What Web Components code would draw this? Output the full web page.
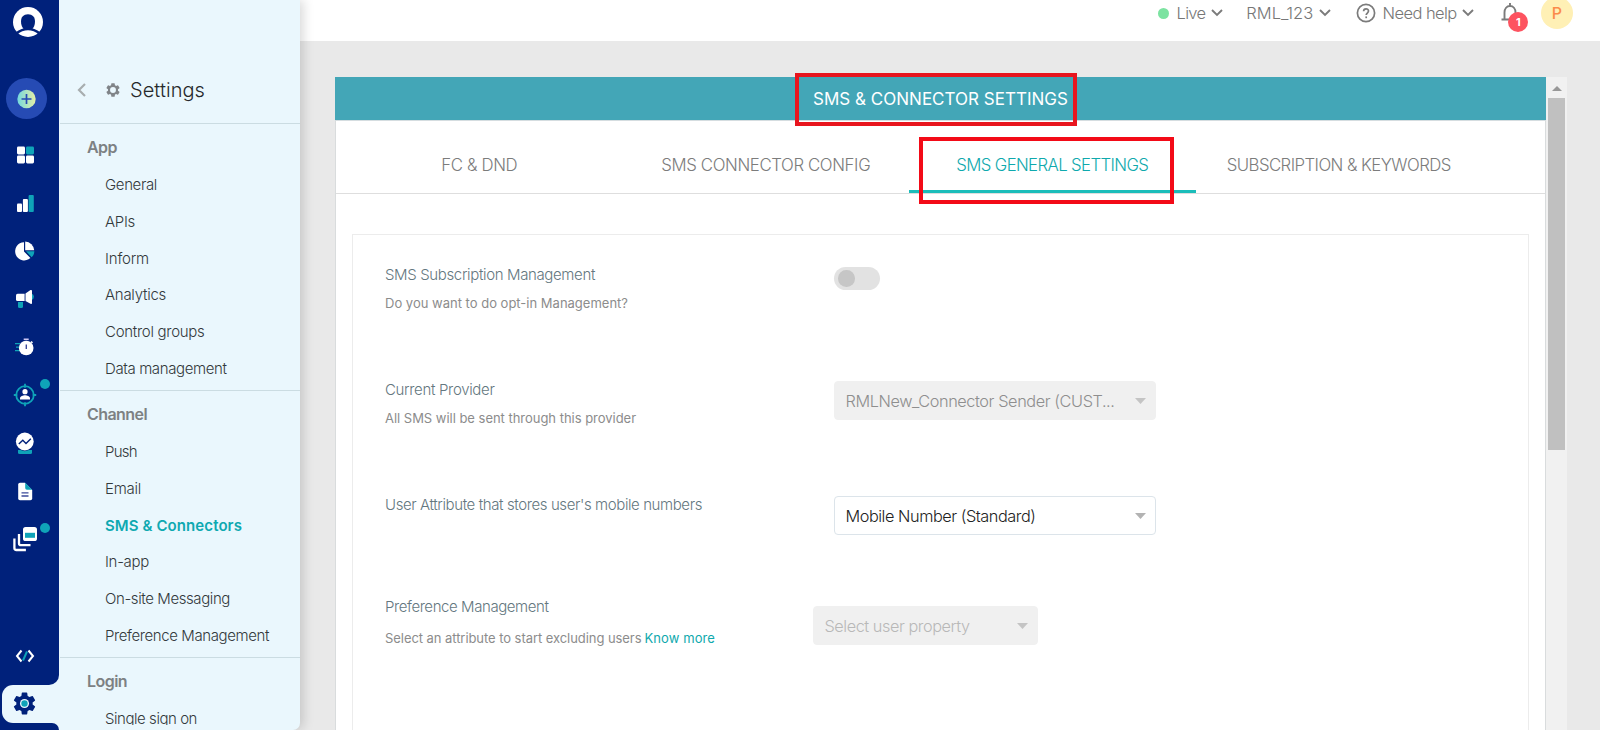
<!DOCTYPE html>
<html lang="en">
<head>
<meta charset="utf-8">
<title>Settings - SMS &amp; Connectors</title>
<style>
  body {
    margin: 0;
    width: 1600px;
    height: 730px;
    overflow: hidden;
    background: #e9e9e9;
    font-family: Inter, "Open Sans", sans-serif;
    font-weight: 300;
  }
</style>
</head>
<body>
<app-shell>
  <nav-rail slot="rail"></nav-rail>

  <settings-menu slot="menu">
    <menu-section heading="App" measure="30">
      <menu-item measure="52">General</menu-item>
      <menu-item measure="30">APIs</menu-item>
      <menu-item measure="44">Inform</menu-item>
      <menu-item measure="61">Analytics</menu-item>
      <menu-item measure="99.500">Control groups</menu-item>
      <menu-item measure="121.500">Data management</menu-item>
    </menu-section>
    <menu-section heading="Channel" measure="60">
      <menu-item measure="32">Push</menu-item>
      <menu-item measure="36">Email</menu-item>
      <menu-item measure="137" active>SMS &amp; Connectors</menu-item>
      <menu-item measure="44">In-app</menu-item>
      <menu-item measure="125">On-site Messaging</menu-item>
      <menu-item measure="164">Preference Management</menu-item>
    </menu-section>
    <menu-section heading="Login" measure="40">
      <menu-item measure="92">Single sign on</menu-item>
    </menu-section>
  </settings-menu>

  <top-bar slot="top"></top-bar>

  <settings-panel heading="SMS &amp; CONNECTOR SETTINGS">
    <panel-tab slot="tab" measure="76">FC &amp; DND</panel-tab>
    <panel-tab slot="tab" measure="209">SMS CONNECTOR CONFIG</panel-tab>
    <panel-tab slot="tab" measure="192">SMS GENERAL SETTINGS</panel-tab>
    <panel-tab slot="tab" measure="224">SUBSCRIPTION &amp; KEYWORDS</panel-tab>

    <form-row style="height:115px">
      <fit-text slot="label" measure="210">SMS Subscription Management</fit-text>
      <fit-text slot="hint" measure="243">Do you want to do opt-in Management?</fit-text>
      <toggle-switch></toggle-switch>
    </form-row>
    <form-row style="height:115px">
      <fit-text slot="label" measure="109.500">Current Provider</fit-text>
      <fit-text slot="hint" measure="251">All SMS will be sent through this provider</fit-text>
      <select-box disabled measure="269">RMLNew_Connector Sender (CUST...</select-box>
    </form-row>
    <form-row style="height:102px">
      <fit-text slot="label" measure="317">User Attribute that stores user's mobile numbers</fit-text>
      <select-box measure="190">Mobile Number (Standard)</select-box>
    </form-row>
    <form-row style="height:110px" compact>
      <fit-text slot="label" measure="163.500">Preference Management</fit-text>
      <fit-text slot="hint" measure="256.500">Select an attribute to start excluding users</fit-text>
      <fit-text slot="link" measure="70.500">Know more</fit-text>
      <select-box disabled placeholder measure="145">Select user property</select-box>
    </form-row>
  </settings-panel>
</app-shell>

<script>
// Sets the tracking of its text so that the text fills the given measure
class FitText extends HTMLElement {
  constructor() {
    super();
    this.attachShadow({mode: 'open'}).innerHTML = `
      <style>
        :host { display: inline-block; white-space: nowrap; }
      </style>
      <slot></slot>
    `;
  }

  connectedCallback() {
    const measure = parseFloat(this.getAttribute('measure'));
    const count = this.textContent.length;
    if (!measure || !count) return;
    this.style.letterSpacing = '0px';
    const range = document.createRange();
    range.selectNodeContents(this);
    const width = range.getBoundingClientRect().width;
    if (width) this.style.letterSpacing = `${((measure - width) / count).toFixed(3)}px`;
  }
}

class AppShell extends HTMLElement {
  constructor() {
    super();
    this.attachShadow({mode: 'open'}).innerHTML = `
      <style>
        :host {
          display: grid;
          grid-template-columns: 60px 240px 1fr;
          width: 1600px;
          height: 730px;
        }
        .main {
          display: flex;
          flex-direction: column;
          min-width: 0;
          height: 730px;
          overflow: hidden;
        }
        .content {
          flex: 1;
          min-height: 0;
          padding: 36px 33px 0 35px;
        }
      </style>
      <slot name="rail"></slot>
      <slot name="menu"></slot>
      <div class="main">
        <slot name="top"></slot>
        <div class="content"><slot></slot></div>
      </div>
    `;
  }
}

const railIcons = [
  // dashboard
  `<svg width="18" height="18" viewBox="0 0 18 18"><g fill="#fff"><rect x="1" y=".5" width="8" height="8" rx="1.4"/><rect x="1" y="9.5" width="8" height="8" rx="1.4"/><rect x="10" y="9.5" width="8" height="8" rx="1.4"/></g><rect x="10" y=".5" width="8" height="8" rx="1.4" fill="#0fa3b8"/></svg>`,
  // bars
  `<svg width="18" height="18" viewBox="0 0 18 18"><rect x="1" y="9.4" width="5" height="8.6" rx="1" fill="#fff"/><rect x="6.900" y="5" width="5" height="13" rx="1" fill="#fff"/><rect x="12.600" y="1" width="5.2" height="17" rx="1" fill="#0fa3b8"/></svg>`,
  // pie
  `<svg width="20" height="20" viewBox="0 0 20 20"><path d="M9 1.2v9.2l6.4 6.6A9.1 9.1 0 1 1 9 1.2z" fill="#fff"/><path d="M10.2.6a9.2 9.2 0 0 1 9 8.7h-9z" fill="#fff"/><path d="M11 10.3h8.4a9 9 0 0 1-2.7 6z" fill="#0fa3b8"/></svg>`,
  // megaphone
  `<svg width="20" height="20" viewBox="0 0 20 20"><path d="M3 13h5v4.500q0 1.500-1.500 1.500H4.500Q3 19 3 17.500z" fill="#0fa3b8"/><path d="M16.500 4.600a3.400 3.400 0 0 1 0 6.500z" fill="#0fa3b8"/><path d="M2.600 4.800h7v7.200h-7Q1 12 1 10.400V6.400Q1 4.800 2.600 4.800z" fill="#fff"/><path d="M10.500 4.500L15.500 1Q17 .5 17 2v12q0 1.500-1.500.8L10.500 12z" fill="#fff"/></svg>`,
  // timer
  `<svg width="20" height="20" viewBox="0 0 20 20"><g fill="none" stroke="#0fa3b8" stroke-width="1.300"><path d="M0 6.700h5M1 10.200h4M0 13.600h5"/></g><circle cx="11.200" cy="11" r="7.300" fill="#fff"/><path d="M8.700 2.300h5" stroke="#cfc8f5" stroke-width="1.600"/><path d="M16 4.500l1.500 1.400" stroke="#fff" stroke-width="1.500"/><path d="M11.300 7.500v4.500" stroke="#3c4a9a" stroke-width="1.400"/></svg>`,
  // target
  `<svg width="24" height="24" viewBox="0 0 24 24"><circle cx="12" cy="12" r="8.800" fill="none" stroke="#0fa3b8" stroke-width="1.800"/><path d="M12 .8v4M12 19.200v4M.8 12h3.500M19.700 12h3.500" stroke="#0fa3b8" stroke-width="1.800"/><circle cx="12" cy="8.700" r="2.600" fill="#fff"/><path d="M7 16.500v-1.300c0-2 3-3 5-3s5 1 5 3v1.300z" fill="#fff"/></svg>`,
  // predictions
  `<svg width="20" height="24" viewBox="0 0 20 24"><path d="M3 19h14v2.500q0 1.500-1.500 1.500h-11Q3 23 3 21.500z" fill="#0fa3b8"/><circle cx="9.800" cy="10.500" r="9.700" fill="#00217b"/><circle cx="9.800" cy="10.500" r="8.900" fill="#fff"/><path d="M3.800 13l4-3.800 3.200 3.200 4.800-4.700" fill="none" stroke="#00217b" stroke-width="1.400"/></svg>`,
  // document
  `<svg width="18" height="20" viewBox="0 0 18 20"><path d="M4 1.700H9L16.200 9v8.500q0 1.800-1.800 1.800H4q-1.800 0-1.800-1.800v-14q0-1.800 1.800-1.800z" fill="#fff"/><path d="M9.200 1.700l7 7h-5.200q-1.800 0-1.800-1.800z" fill="#0fa3b8"/><path d="M5.500 11.800h7M5.500 15h7" stroke="#3c4a9a" stroke-width="1.300"/></svg>`,
  // layers
  `<svg width="26" height="26" viewBox="0 0 26 26"><g fill="none" stroke="#fff" stroke-width="2.300"><path d="M2.400 12.500v9.500q0 2 2 2h9.500"/><path d="M7 8v9.200q0 2 2 2h9.500"/></g><rect x="11" y="1" width="14" height="14" rx="2.600" fill="#fff"/><rect x="13" y="6.800" width="10" height="5" fill="#0fa3b8"/></svg>`
];

const gearPath = 'M19.140 12.940c.040-.300.060-.610.060-.940s-.020-.640-.070-.940l2.030-1.580a.5.5 0 0 0 .120-.610l-1.920-3.320a.5.5 0 0 0-.590-.220l-2.390.960a7 7 0 0 0-1.620-.940l-.360-2.540a.5.5 0 0 0-.480-.410h-3.840a.5.5 0 0 0-.470.410l-.360 2.540c-.590.240-1.130.570-1.620.940l-2.390-.960a.5.5 0 0 0-.590.220L2.740 8.870a.5.5 0 0 0 .120.610l2.030 1.580c-.050.300-.090.630-.090.940s.020.640.070.940l-2.030 1.580a.5.5 0 0 0-.120.610l1.920 3.320c.120.220.370.290.590.220l2.390-.960c.500.380 1.030.700 1.620.940l.360 2.540c.050.240.240.410.480.410h3.840c.240 0 .440-.170.470-.410l.360-2.540c.590-.240 1.130-.560 1.620-.940l2.390.960c.220.080.470 0 .590-.220l1.920-3.320a.5.5 0 0 0-.120-.610z';

class NavRail extends HTMLElement {
  constructor() {
    super();
    const badged = [5, 8];
    const items = railIcons.map((icon, i) =>
      `<div class="item">${icon}${badged.includes(i) ? '<i></i>' : ''}</div>`).join('');
    this.attachShadow({mode: 'open'}).innerHTML = `
      <style>
        :host {
          display: flex;
          flex-direction: column;
          height: 730px;
          overflow: hidden;
          background: #eaf7fd;
        }
        svg { display: block; }
        .blue {
          box-sizing: border-box;
          width: 59.300px;
          height: 685px;
          flex: none;
          background: #00217b;
          border-radius: 0 0 10px 0;
        }
        .logo { padding: 7px 0 0 13px; }
        .plus {
          display: flex;
          align-items: center;
          justify-content: center;
          width: 41px;
          height: 41px;
          margin: 41px 0 12px 6px;
          border-radius: 50%;
          background: #264bb4;
        }
        .item {
          position: relative;
          display: flex;
          align-items: center;
          justify-content: center;
          width: 50px;
          height: 48px;
        }
        .item i {
          position: absolute;
          left: 40px;
          top: 8px;
          width: 10px;
          height: 10px;
          border-radius: 50%;
          background: #0fa3b8;
        }
        .code { margin-top: 69px; }
        .current {
          display: flex;
          height: 37.500px;
          flex: none;
          background: #00217b;
        }
        .current div {
          display: flex;
          align-items: center;
          box-sizing: border-box;
          width: 58px;
          margin-left: 2px;
          padding-left: 10px;
          background: #eaf7fd;
          border-radius: 11px 0 0 11px;
        }
        .foot {
          width: 59.300px;
          flex: 1;
          background: #00217b;
          border-radius: 0 10px 0 0;
        }
      </style>
      <div class="blue">
        <div class="logo">
          <svg width="30" height="30" viewBox="0 0 30 30">
            <circle cx="15" cy="15" r="15" fill="#fff"/>
            <path d="M15 7.300c4.500 0 7 3 7 7.200 0 3.600-1.300 6.500-3.200 8h-7.600c-1.900-1.500-3.200-4.400-3.200-8 0-4.200 2.500-7.200 7-7.200z" fill="#00217b"/>
            <path d="M3 26.500Q15 17.500 27 26.500" fill="none" stroke="#00217b" stroke-width="2.300"/>
          </svg>
        </div>
        <div class="plus">
          <svg width="20" height="20" viewBox="0 0 20 20">
            <linearGradient id="g"><stop offset="0" stop-color="#73d8df"/><stop offset="1" stop-color="#e4efa6"/></linearGradient>
            <circle cx="9.500" cy="10" r="9.200" fill="url(#g)"/>
            <path d="M4.500 10h10M9.500 5v10" stroke="#264bb4" stroke-width="1.700"/>
          </svg>
        </div>
        ${items}
        <div class="item code">
          <svg width="20" height="14" viewBox="0 0 20 14" fill="none" stroke-width="2">
            <path d="M6.500 1.500L2 7l4.500 5.500M13.500 1.500L18 7l-4.500 5.500" stroke="#fff"/>
            <path d="M12 2.500L8 11.500" stroke="#0fa3b8"/>
          </svg>
        </div>
      </div>
      <div class="current"><div>
        <svg width="25" height="25" viewBox="1 1 22 22">
          <path d="${gearPath}" fill="#00217b"/>
          <circle cx="12" cy="12" r="4" fill="#eaf7fd"/>
          <circle cx="12" cy="12" r="2.800" fill="#0fa3b8"/>
        </svg>
      </div></div>
      <div class="foot"></div>
    `;
  }
}

class SettingsMenu extends HTMLElement {
  constructor() {
    super();
    this.attachShadow({mode: 'open'}).innerHTML = `
      <style>
        :host {
          display: block;
          position: relative;
          z-index: 1;
          box-sizing: border-box;
          height: 730px;
          background: #eaf7fd;
          border-radius: 0 0 7px 0;
          box-shadow: 3px 0 12px rgba(0, 0, 0, .16);
          clip-path: inset(0 -20px 0 0);
        }
        header {
          display: flex;
          align-items: center;
          box-sizing: border-box;
          height: 124px;
          padding: 56px 0 0 17px;
          border-bottom: 1px solid #cbdce2;
        }
        header fit-text {
          margin-left: 10.500px;
          font-size: 20px;
          line-height: 24px;
          color: #26292b;
        }
        .gear { margin-left: 19.500px; }
        .list {
          height: 601px;
          overflow: hidden;
        }
      </style>
      <header>
        <svg width="9" height="14" viewBox="0 0 9 14" fill="none" stroke="#a8adaf" stroke-width="2.200"><path d="M8 1L2 7l6 6"/></svg>
        <svg class="gear" width="14" height="14" viewBox="2 2 20 20"><path fill="#808488" fill-rule="evenodd" d="${gearPath} M12 7.800a4.200 4.200 0 1 0 0 8.400 4.200 4.200 0 0 0 0-8.400z"/></svg>
        <fit-text measure="75">Settings</fit-text>
      </header>
      <div class="list"><slot></slot></div>
    `;
  }
}

class MenuSection extends HTMLElement {
  constructor() {
    super();
    this.attachShadow({mode: 'open'}).innerHTML = `
      <style>
        :host {
          display: block;
          box-sizing: border-box;
          padding-bottom: 2.500px;
          border-bottom: 1px solid #cbdce2;
        }
        h2 {
          box-sizing: border-box;
          height: 43.300px;
          margin: 0;
          padding: 13px 0 0 27px;
          font-size: 16px;
          font-weight: 600;
          line-height: 20px;
          color: #7d8183;
        }
      </style>
      <h2><fit-text measure="${this.getAttribute('measure')}">${this.getAttribute('heading')}</fit-text></h2>
      <slot></slot>
    `;
  }
}

class MenuItem extends HTMLElement {
  constructor() {
    super();
    this.attachShadow({mode: 'open'}).innerHTML = `
      <style>
        :host {
          display: block;
          height: 36.700px;
          padding-left: 45px;
          font-size: 15px;
          line-height: 36.700px;
          color: #33393c;
        }
        :host([active]) {
          font-weight: 600;
          color: #0fa9b1;
        }
      </style>
      <fit-text measure="${this.getAttribute('measure')}">${this.innerHTML}</fit-text>
    `;
  }
}

class TopBar extends HTMLElement {
  constructor() {
    super();
    const chevron = `<svg class="chevron" width="12" height="8" viewBox="0 0 12 8" fill="none" stroke="#7b7b7b" stroke-width="1.900"><path d="M1 1l5 5 5-5"/></svg>`;
    this.attachShadow({mode: 'open'}).innerHTML = `
      <style>
        :host {
          display: flex;
          align-items: center;
          box-sizing: border-box;
          height: 41px;
          flex: none;
          padding: 0 27px 15px 858px;
          background: #fff;
          font-size: 16.500px;
          line-height: 24px;
          color: #777;
        }
        svg { display: block; flex: none; }
        .dot {
          width: 11px;
          height: 11px;
          border-radius: 50%;
          background: #7ce3a1;
        }
        .chevron { margin-left: 5.300px; }
        .bell { position: relative; margin-left: 27.500px; }
        .count {
          position: absolute;
          left: 7px;
          top: 9px;
          width: 20px;
          height: 20px;
          border-radius: 50%;
          background: #fd5360;
          color: #fff;
          font-size: 11px;
          font-weight: 700;
          line-height: 20px;
          text-align: center;
        }
        .avatar {
          width: 32px;
          height: 32px;
          margin-left: auto;
          border-radius: 50%;
          background: #fff0b5;
          color: #fb8b4b;
          font-size: 16px;
          font-weight: 500;
          line-height: 32px;
          text-align: center;
        }
      </style>
      <span class="dot"></span>
      <fit-text measure="29" style="margin-left:7.500px">Live</fit-text>${chevron}
      <fit-text measure="67" style="margin-left:23.500px">RML_123</fit-text>${chevron}
      <svg style="margin-left:25px" width="20" height="20" viewBox="0 0 20 20" fill="none" stroke="#7b7b7b" stroke-width="1.700"><circle cx="10" cy="10" r="8.600"/><path d="M7.600 8.300c0-3.300 4.900-3.200 4.900-.2 0 1.900-2.300 2-2.300 3.900"/><path d="M10.200 13.400v1.800"/></svg>
      <fit-text measure="74" style="margin-left:7px">Need help</fit-text>${chevron}
      <div class="bell">
        <svg width="18" height="20" viewBox="0 0 18 20" fill="none" stroke="#7b7b7b" stroke-width="1.900"><path d="M9 0v3M3.500 16.500V9.500c0-4 2.300-6.500 5.500-6.500s5.500 2.500 5.500 6.500v7M.5 16.500h17"/></svg>
        <span class="count">1</span>
      </div>
      <div class="avatar">P</div>
    `;
  }
}

class SettingsPanel extends HTMLElement {
  constructor() {
    super();
    this.attachShadow({mode: 'open'}).innerHTML = `
      <style>
        :host {
          display: flex;
          height: 660px;
        }
        .panel {
          box-sizing: border-box;
          width: 1211px;
          background: #fff;
          border: 1px solid #d9dcdd;
          border-top: 0;
        }
        .title {
          height: 43px;
          margin: 0 -1px;
          background: #43a6b7;
          border-bottom: 1px solid #d5dde0;
          box-sizing: content-box;
          display: flex;
          justify-content: center;
          font-size: 17px;
          font-weight: 400;
          line-height: 45px;
          color: #fff;
        }
        .tabs {
          display: flex;
          height: 72px;
          border-bottom: 1px solid #dedede;
        }
        .card {
          box-sizing: border-box;
          height: 520px;
          margin: 40px 16px 0;
          padding: 25px 32px 0;
          border: 1px solid #ececec;
        }
        .scroll {
          box-sizing: border-box;
          width: 21px;
          padding: 9px 2px 0 2px;
          background: #f1f1f1;
        }
        .scroll svg { display: block; margin: 0 auto 7px; }
        .thumb {
          height: 352px;
          background: #c0c0c0;
        }
        /* red frames drawn over the heading and the current tab */
        .title span, .mark {
          position: relative;
        }
        .title span::after {
          content: "";
          position: absolute;
          box-sizing: border-box;
          left: -18px;
          top: -4.500px;
          width: 282px;
          height: 53px;
          border: 4px solid #e8151e;
        }
        .mark::after {
          content: "";
          position: absolute;
          box-sizing: border-box;
          left: 583px;
          top: 16px;
          width: 255px;
          height: 67px;
          border: 4px solid #f30a17;
        }
      </style>
      <div class="panel">
        <div class="title"><span><fit-text measure="255">${this.getAttribute('heading').replace('&', '&amp;')}</fit-text></span></div>
        <div class="tabs mark"><slot name="tab"></slot></div>
        <div class="card"><slot></slot></div>
      </div>
      <div class="scroll">
        <svg width="10" height="5" viewBox="0 0 10 5"><path d="M5 0l5 5H0z" fill="#989898"/></svg>
        <div class="thumb"></div>
      </div>
    `;
    this.querySelectorAll('panel-tab')[2].setAttribute('active', '');
  }
}

class PanelTab extends HTMLElement {
  constructor() {
    super();
    this.attachShadow({mode: 'open'}).innerHTML = `
      <style>
        :host {
          display: flex;
          justify-content: center;
          box-sizing: border-box;
          width: 286.500px;
          height: 72px;
          padding-top: 32px;
          font-size: 16.800px;
          line-height: 24px;
          color: #7c7c7c;
        }
        :host([active]) {
          color: #0fa9ad;
          border-bottom: 3px solid #1bbdba;
        }
      </style>
      <fit-text measure="${this.getAttribute('measure')}">${this.innerHTML}</fit-text>
    `;
  }
}

class FormRow extends HTMLElement {
  constructor() {
    super();
    this.attachShadow({mode: 'open'}).innerHTML = `
      <style>
        :host {
          display: grid;
          grid-template-columns: 449px 1fr;
          align-items: start;
        }
        :host([compact]) { grid-template-columns: 428px 1fr; }
        .label {
          padding-top: 5px;
          font-size: 15px;
          line-height: 20px;
          color: #647780;
        }
        .hint {
          margin-top: 8px;
          font-size: 13px;
          font-weight: 400;
          line-height: 20px;
          color: #8c8c8c;
        }
        :host([compact]) .hint { margin-top: 11px; }
        ::slotted([slot="link"]) {
          margin-left: 3px;
          color: #0fa9ad;
        }
        .field { padding-top: 7px; }
        :host([compact]) .field { padding-top: 15px; }
      </style>
      <div>
        <div class="label"><slot name="label"></slot></div>
        <div class="hint"><slot name="hint"></slot><slot name="link"></slot></div>
      </div>
      <div class="field"><slot></slot></div>
    `;
  }
}

class ToggleSwitch extends HTMLElement {
  constructor() {
    super();
    this.attachShadow({mode: 'open'}).innerHTML = `
      <style>
        :host {
          display: flex;
          align-items: center;
          box-sizing: border-box;
          width: 46px;
          height: 23px;
          padding-left: 4px;
          border-radius: 12px;
          background: #e2e2e2;
        }
        span {
          width: 16.500px;
          height: 16.500px;
          border-radius: 50%;
          background: #c6c6c6;
        }
      </style>
      <span></span>
    `;
  }
}

class SelectBox extends HTMLElement {
  constructor() {
    super();
    this.attachShadow({mode: 'open'}).innerHTML = `
      <style>
        :host {
          display: flex;
          align-items: center;
          justify-content: space-between;
          box-sizing: border-box;
          width: 321.500px;
          height: 38.500px;
          margin-top: -.6px;
          padding: 0 9px 0 10.500px;
          border: 1px solid #dce4ea;
          border-radius: 4px;
          font-size: 16.300px;
          color: #222;
          background: #fff;
        }
        :host([disabled]) {
          border-color: #f0f0f0;
          background: #f0f0f0;
          color: #8e8e8e;
        }
        :host([placeholder]) {
          width: 225px;
          color: #b8b8b8;
        }
        path { fill: #b3b3b3; }
        :host([disabled]) path { fill: #c4c4c4; }
      </style>
      <fit-text measure="${this.getAttribute('measure')}">${this.innerHTML}</fit-text>
      <svg width="11" height="6" viewBox="0 0 11 6"><path d="M0 0h11L5.500 6z"/></svg>
    `;
  }
}

customElements.define('app-shell', AppShell);
customElements.define('nav-rail', NavRail);
customElements.define('settings-menu', SettingsMenu);
customElements.define('menu-section', MenuSection);
customElements.define('menu-item', MenuItem);
customElements.define('top-bar', TopBar);
customElements.define('settings-panel', SettingsPanel);
customElements.define('panel-tab', PanelTab);
customElements.define('form-row', FormRow);
customElements.define('toggle-switch', ToggleSwitch);
customElements.define('select-box', SelectBox);
// last, when every box the text sits in has its own styles
customElements.define('fit-text', FitText);
</script>
</body>
</html>
